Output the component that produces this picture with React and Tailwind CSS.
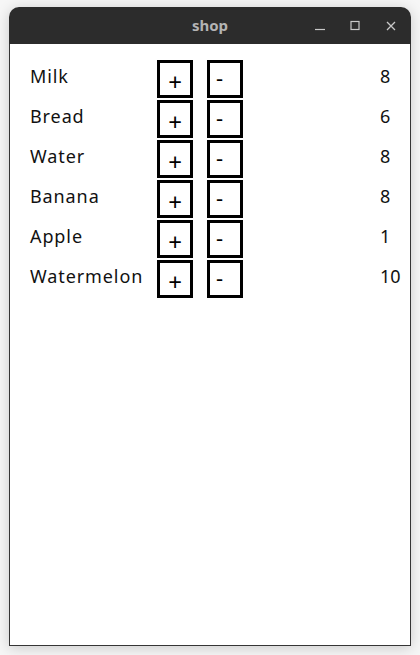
import React from "react";

const items = [
  ["Milk", 8],
  ["Bread", 6],
  ["Water", 8],
  ["Banana", 8],
  ["Apple", 1],
  ["Watermelon", 10],
];

export default function App() {
  return (
    <div className="w-[420px] h-[655px] bg-[#f6f6f6] pt-[7px] pl-[9px] overflow-hidden">
      <div className="w-[402px] h-[639px] flex flex-col shadow-[0_2px_14px_rgba(0,0,0,0.18)] rounded-t-[10px]">
        <div className="h-[37px] bg-[#2c2c2c] rounded-t-[10px] relative flex items-center justify-center shrink-0">
          <span className="text-[#b4b4b4] font-bold text-[15px] font-['Noto_Sans',sans-serif] leading-none">shop</span>
          <div className="absolute right-0 top-0 h-full flex items-center">
            <svg width="12" height="12" viewBox="0 0 12 12" className="mr-[23px]">
              <line x1="1" y1="9.5" x2="11" y2="9.5" stroke="#c8c8c8" strokeWidth="1.2" />
            </svg>
            <svg width="12" height="12" viewBox="0 0 12 12" className="mr-[24px]">
              <rect x="2" y="1.5" width="8" height="8" fill="none" stroke="#c8c8c8" strokeWidth="1.2" />
            </svg>
            <svg width="12" height="12" viewBox="0 0 12 12" className="mr-[14px]">
              <path d="M2 2 L10 10 M10 2 L2 10" stroke="#c8c8c8" strokeWidth="1.3" />
            </svg>
          </div>
        </div>
        <div className="flex-1 bg-white border-x border-b border-[#353535] pt-[16px] pl-[20px] flex flex-col gap-[2px] font-['Noto_Sans',sans-serif]">
          {items.map(([name, n]) => (
            <div key={name} className="flex items-start h-[38px]">
              <div className="w-[127px] pt-[1px] text-[18px] leading-[30px] tracking-[0.9px] text-[#111]">{name}</div>
              <div className="w-[36px] h-[38px] border-[3px] border-black flex items-center justify-center pt-[6px] text-[24px] leading-none text-black">+</div>
              <div className="w-[36px] h-[38px] ml-[14px] border-[3px] border-black flex items-start pt-[3px] pl-[6px] text-[22px] leading-none text-black">-</div>
              <div className="ml-[137px] pt-[1px] text-[18px] leading-[30px] text-[#111]">{n}</div>
            </div>
          ))}
        </div>
      </div>
    </div>
  );
}
